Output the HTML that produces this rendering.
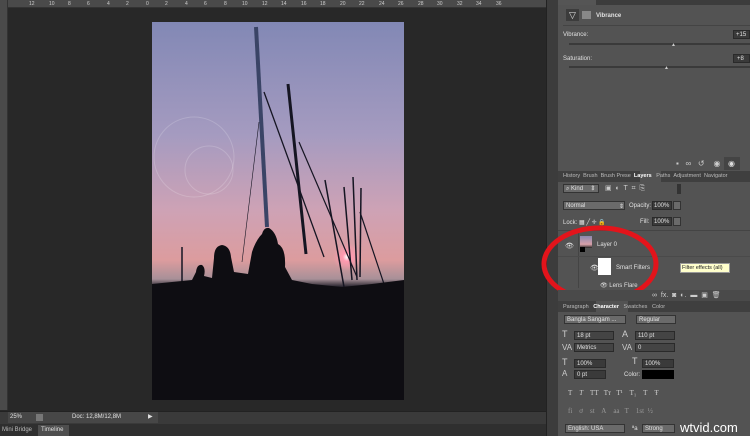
<!DOCTYPE html>
<html><head><meta charset="utf-8"><style>
*{margin:0;padding:0;box-sizing:border-box}
body{width:750px;height:436px;background:#282828;position:relative;overflow:hidden;font-family:"Liberation Sans",sans-serif;font-size:6px;color:#ddd}
.a{position:absolute}
.t{position:absolute;white-space:nowrap;font-size:6px;color:#e0e0e0}
.r{position:absolute;top:1px;font-size:5px;color:#ccc}
.box{position:absolute;background:#3a3a3a;border:1px solid #2a2a2a}
.dd{position:absolute;background:#6a6a6a;border:1px solid #333}
</style></head><body>
<!-- rulers -->
<div class="a" style="left:0;top:0;width:546px;height:8px;background:#4a4a4a;border-bottom:1px solid #333"></div>
<div class="a" style="left:0;top:0;width:8px;height:410px;background:#4a4a4a;border-right:1px solid #333"></div>
<span class="r" style="left:29px">12</span><span class="r" style="left:49px">10</span><span class="r" style="left:68px">8</span><span class="r" style="left:87px">6</span><span class="r" style="left:107px">4</span><span class="r" style="left:126px">2</span><span class="r" style="left:146px">0</span><span class="r" style="left:165px">2</span><span class="r" style="left:185px">4</span><span class="r" style="left:204px">6</span><span class="r" style="left:224px">8</span><span class="r" style="left:242px">10</span><span class="r" style="left:262px">12</span><span class="r" style="left:281px">14</span><span class="r" style="left:301px">16</span><span class="r" style="left:320px">18</span><span class="r" style="left:340px">20</span><span class="r" style="left:359px">22</span><span class="r" style="left:379px">24</span><span class="r" style="left:398px">26</span><span class="r" style="left:418px">28</span><span class="r" style="left:437px">30</span><span class="r" style="left:457px">32</span><span class="r" style="left:476px">34</span><span class="r" style="left:496px">36</span>
<!-- dark strip -->
<div class="a" style="left:546px;top:0;width:12px;height:436px;background:#3c3c3c;border-left:1px solid #222"></div>
<!-- photo -->
<svg class="a" style="left:152px;top:22px" width="252" height="378" viewBox="0 0 252 378">
<defs><linearGradient id="g" x1="0" y1="0" x2="0" y2="1">
<stop offset="0" stop-color="#8288b5"/><stop offset="0.3" stop-color="#a59bc0"/><stop offset="0.5" stop-color="#cea2b5"/><stop offset="0.63" stop-color="#dc9c9e"/><stop offset="0.68" stop-color="#a89098"/><stop offset="0.7" stop-color="#2a2630"/><stop offset="0.78" stop-color="#121016"/><stop offset="1" stop-color="#0a0909"/></linearGradient>
<radialGradient id="s"><stop offset="0" stop-color="#fff"/><stop offset="0.3" stop-color="#ff9ab0"/><stop offset="1" stop-color="#ff9ab0" stop-opacity="0"/></radialGradient></defs>
<rect width="252" height="378" fill="url(#g)"/>
<circle cx="195" cy="235" r="14" fill="url(#s)"/>
<circle cx="42" cy="135" r="40" fill="none" stroke="#fff" stroke-opacity="0.18"/>
<circle cx="57" cy="148" r="24" fill="none" stroke="#fff" stroke-opacity="0.18"/>
<g stroke="#151522" fill="none">
<path d="M104 5 L115 205" stroke-width="4" stroke="#3a4466"/>
<path d="M136 62 L154 232" stroke-width="3"/>
<path d="M112 70 L172 235" stroke-width="1.3"/>
<path d="M147 120 L205 255" stroke-width="1.2"/>
<path d="M173 158 L192 265" stroke-width="1.5"/>
<path d="M192 165 L200 258" stroke-width="1.5"/>
<path d="M201 155 L205 258" stroke-width="1.5"/>
<path d="M209 166 L208 255" stroke-width="1.5"/>
<path d="M208 190 L232 262" stroke-width="1.2"/>
<path d="M107 100 L90 240" stroke-width="0.6"/>
<path d="M30 225 L30 260" stroke-width="1.5"/>
</g>
<g fill="#0e0d12">
<path d="M0 262 L40 258 L44 250 Q45 242 50 243 Q54 246 52 254 L60 256 L62 236 Q62 224 70 223 Q78 224 79 235 L82 250 L96 252 L100 230 Q104 218 110 212 Q112 205 117 206 Q124 210 126 222 Q134 226 133 245 L140 258 L160 262 L190 265 L220 262 L252 258 L252 378 L0 378Z"/>
<path d="M260 0"/>
</g>
</svg>
<!-- status bar -->
<div class="a" style="left:0;top:411px;width:546px;height:13px;background:#3a3a3a;border-top:1px solid #222"></div>
<div class="a" style="left:8px;top:412px;width:150px;height:11px;background:#474747"></div>
<div class="t" style="left:10px;top:414px">25%</div>
<div class="a" style="left:36px;top:414px;width:7px;height:7px;background:#777"></div>
<div class="t" style="left:72px;top:414px">Doc: 12,8M/12,8M</div>
<div class="t" style="left:148px;top:413px">▶</div>
<div class="a" style="left:0;top:424px;width:546px;height:12px;background:#2f2f2f"></div>
<div class="t" style="left:2px;top:427px;color:#bbb">Mini Bridge</div>
<div class="a" style="left:38px;top:425px;width:31px;height:11px;background:#4e4e4e"></div>
<div class="t" style="left:41px;top:427px">Timeline</div>
<!-- right panel -->
<div class="a" style="left:558px;top:0;width:192px;height:436px;background:#535353"></div>
<div class="a" style="left:558px;top:0;width:192px;height:5px;background:#3c3c3c"></div>
<div class="a" style="left:558px;top:0;width:38px;height:5px;background:#555"></div>
<div class="a" style="left:566px;top:9px;width:13px;height:12px;background:#3c3c3c"></div>
<div class="t" style="left:569px;top:10px;font-size:9px">▽</div>
<div class="a" style="left:582px;top:11px;width:9px;height:8px;background:#888"></div>
<div class="t" style="left:596px;top:13px;font-weight:bold">Vibrance</div>
<div class="a" style="left:563px;top:25px;width:187px;height:1px;background:#444"></div>
<div class="t" style="left:563px;top:32px">Vibrance:</div>
<div class="box" style="left:733px;top:30px;width:17px;height:9px"></div><div class="t" style="left:736px;top:32px">+15</div>
<div class="a" style="left:569px;top:43px;width:181px;height:2px;background:#3a3a3a"></div>
<div class="t" style="left:671px;top:42px;font-size:5px;color:#ccc">▲</div>
<div class="t" style="left:563px;top:56px">Saturation:</div>
<div class="box" style="left:733px;top:54px;width:17px;height:9px"></div><div class="t" style="left:737px;top:56px">+8</div>
<div class="a" style="left:569px;top:66px;width:181px;height:2px;background:#3a3a3a"></div>
<div class="t" style="left:664px;top:65px;font-size:5px;color:#ccc">▲</div>
<div class="t" style="left:676px;top:159px;font-size:8px;color:#ccc">▪&nbsp;&nbsp; ∞&nbsp;&nbsp; ↺&nbsp;&nbsp;&nbsp; ◉&nbsp;&nbsp; 🗑</div>
<div class="a" style="left:724px;top:157px;width:16px;height:13px;background:#444"></div>
<div class="t" style="left:728px;top:159px;font-size:8px;color:#ddd">◉</div>
<!-- layer tabs -->
<div class="a" style="left:558px;top:171px;width:192px;height:11px;background:#3f3f3f"></div>
<div class="a" style="left:640px;top:171px;width:21px;height:11px;background:#535353"></div>
<div class="t" style="left:563px;top:173px;color:#bbb;font-size:5.5px">History&nbsp;&nbsp;Brush&nbsp;&nbsp;Brush Prese&nbsp;&nbsp;<b style="color:#fff">Layers</b>&nbsp;&nbsp;&nbsp;Paths&nbsp;&nbsp;Adjustment&nbsp;&nbsp;Navigator</div>
<div class="dd" style="left:563px;top:184px;width:36px;height:9px"></div><div class="t" style="left:566px;top:186px">⌕ Kind&nbsp;&nbsp;&nbsp;&nbsp;&nbsp;⇕</div>
<div class="t" style="left:605px;top:184px;font-size:7px;color:#ccc">▣&nbsp; ◐&nbsp; T&nbsp; ⌗&nbsp; ⎘</div>
<div class="a" style="left:677px;top:184px;width:4px;height:10px;background:#333"></div>
<div class="dd" style="left:563px;top:201px;width:62px;height:9px"></div><div class="t" style="left:566px;top:203px">Normal</div><div class="t" style="left:619px;top:203px">⇕</div>
<div class="t" style="left:629px;top:203px">Opacity:</div>
<div class="box" style="left:652px;top:201px;width:20px;height:9px"></div><div class="t" style="left:654px;top:203px">100%</div>
<div class="dd" style="left:673px;top:201px;width:8px;height:9px"></div>
<div class="t" style="left:563px;top:219px">Lock: ▦ ╱ ✛ 🔒</div>
<div class="t" style="left:640px;top:219px">Fill:</div>
<div class="box" style="left:652px;top:217px;width:20px;height:9px"></div><div class="t" style="left:654px;top:219px">100%</div>
<div class="dd" style="left:673px;top:217px;width:8px;height:9px"></div>
<div class="a" style="left:558px;top:230px;width:192px;height:1px;background:#444"></div>
<div class="t" style="left:565px;top:242px;font-size:7px">👁</div>
<div class="a" style="left:578px;top:233px;width:1px;height:55px;background:#444"></div>
<div class="a" style="left:580px;top:236px;width:12px;height:12px;background:linear-gradient(#8a88b0,#d8a0a8 70%,#222)"></div>
<div class="a" style="left:580px;top:247px;width:5px;height:5px;background:#000"></div>
<div class="t" style="left:597px;top:242px">Layer 0</div>
<div class="a" style="left:558px;top:256px;width:192px;height:1px;background:#4a4a4a"></div>
<div class="t" style="left:590px;top:264px;font-size:7px">👁</div>
<div class="a" style="left:598px;top:258px;width:13px;height:17px;background:#fff"></div>
<div class="t" style="left:616px;top:265px">Smart Filters</div>
<div class="t" style="left:600px;top:282px">👁 Lens Flare</div>
<div class="a" style="left:680px;top:263px;width:50px;height:10px;background:#ffffcc;border:1px solid #999"></div>
<div class="t" style="left:682px;top:265px;color:#222;font-size:5.5px">Filter effects (all)</div>
<svg class="a" style="left:540px;top:222px" width="130" height="84"><ellipse cx="60" cy="42" rx="56" ry="36" fill="none" stroke="#e3141b" stroke-width="5"/></svg>
<div class="a" style="left:558px;top:290px;width:192px;height:11px;background:#4a4a4a"></div>
<div class="t" style="left:652px;top:291px;font-size:7px;color:#ccc">∞&nbsp; fx.&nbsp; ◙&nbsp; ◐.&nbsp; ▬&nbsp; ▣&nbsp; 🗑</div>
<!-- character -->
<div class="a" style="left:558px;top:301px;width:192px;height:11px;background:#3f3f3f"></div>
<div class="a" style="left:596px;top:301px;width:32px;height:11px;background:#535353"></div>
<div class="t" style="left:563px;top:304px;color:#bbb;font-size:5.5px">Paragraph&nbsp;&nbsp;&nbsp;<b style="color:#fff">Character</b>&nbsp;&nbsp;&nbsp;Swatches&nbsp;&nbsp;&nbsp;Color</div>
<div class="dd" style="left:564px;top:315px;width:62px;height:9px"></div><div class="t" style="left:567px;top:317px">Bangla Sangam ...</div>
<div class="dd" style="left:636px;top:315px;width:40px;height:9px"></div><div class="t" style="left:639px;top:317px">Regular</div>
<div class="t" style="left:562px;top:329px;font-size:9px;color:#ccc">T</div>
<div class="box" style="left:574px;top:331px;width:40px;height:9px;background:#444"></div><div class="t" style="left:577px;top:333px">18 pt</div>
<div class="t" style="left:622px;top:329px;font-size:9px;color:#ccc">A</div>
<div class="box" style="left:635px;top:331px;width:40px;height:9px;background:#444"></div><div class="t" style="left:638px;top:333px">110 pt</div>
<div class="t" style="left:562px;top:343px;font-size:8px;color:#ccc">VA</div>
<div class="box" style="left:574px;top:343px;width:40px;height:9px;background:#444"></div><div class="t" style="left:577px;top:345px">Metrics</div>
<div class="t" style="left:622px;top:343px;font-size:8px;color:#ccc">VA</div>
<div class="box" style="left:635px;top:343px;width:40px;height:9px;background:#444"></div><div class="t" style="left:638px;top:345px">0</div>
<div class="t" style="left:562px;top:357px;font-size:9px;color:#ccc">T</div>
<div class="box" style="left:574px;top:359px;width:32px;height:9px"></div><div class="t" style="left:577px;top:361px">100%</div>
<div class="t" style="left:632px;top:356px;font-size:9px;color:#ccc">T</div>
<div class="box" style="left:642px;top:359px;width:32px;height:9px"></div><div class="t" style="left:645px;top:361px">100%</div>
<div class="t" style="left:562px;top:369px;font-size:8px;color:#ccc">A</div>
<div class="box" style="left:574px;top:370px;width:32px;height:9px"></div><div class="t" style="left:577px;top:372px">0 pt</div>
<div class="t" style="left:624px;top:372px">Color:</div>
<div class="a" style="left:642px;top:370px;width:32px;height:9px;background:#000"></div>
<div class="t" style="left:568px;top:389px;font-size:7px;color:#ccc;font-family:'Liberation Serif',serif">T&nbsp;&nbsp;&nbsp; <i>T</i>&nbsp;&nbsp;&nbsp; TT&nbsp;&nbsp; Tт&nbsp;&nbsp; T¹&nbsp;&nbsp;&nbsp; T₁&nbsp;&nbsp;&nbsp; T&nbsp;&nbsp;&nbsp; Ŧ</div>
<div class="t" style="left:568px;top:407px;font-size:7px;color:#999;font-family:'Liberation Serif',serif">fi&nbsp;&nbsp;&nbsp; ơ&nbsp;&nbsp;&nbsp; st&nbsp;&nbsp;&nbsp; A&nbsp;&nbsp;&nbsp; aa&nbsp;&nbsp; T&nbsp;&nbsp;&nbsp; 1st&nbsp; ½</div>
<div class="dd" style="left:565px;top:424px;width:60px;height:9px"></div><div class="t" style="left:568px;top:426px">English: USA</div>
<div class="t" style="left:632px;top:426px">ªa</div>
<div class="dd" style="left:642px;top:424px;width:33px;height:9px"></div><div class="t" style="left:645px;top:426px">Strong</div>
<div class="t" style="left:680px;top:420px;font-size:13px;color:#fff">wtvid.com</div>
</body></html>
